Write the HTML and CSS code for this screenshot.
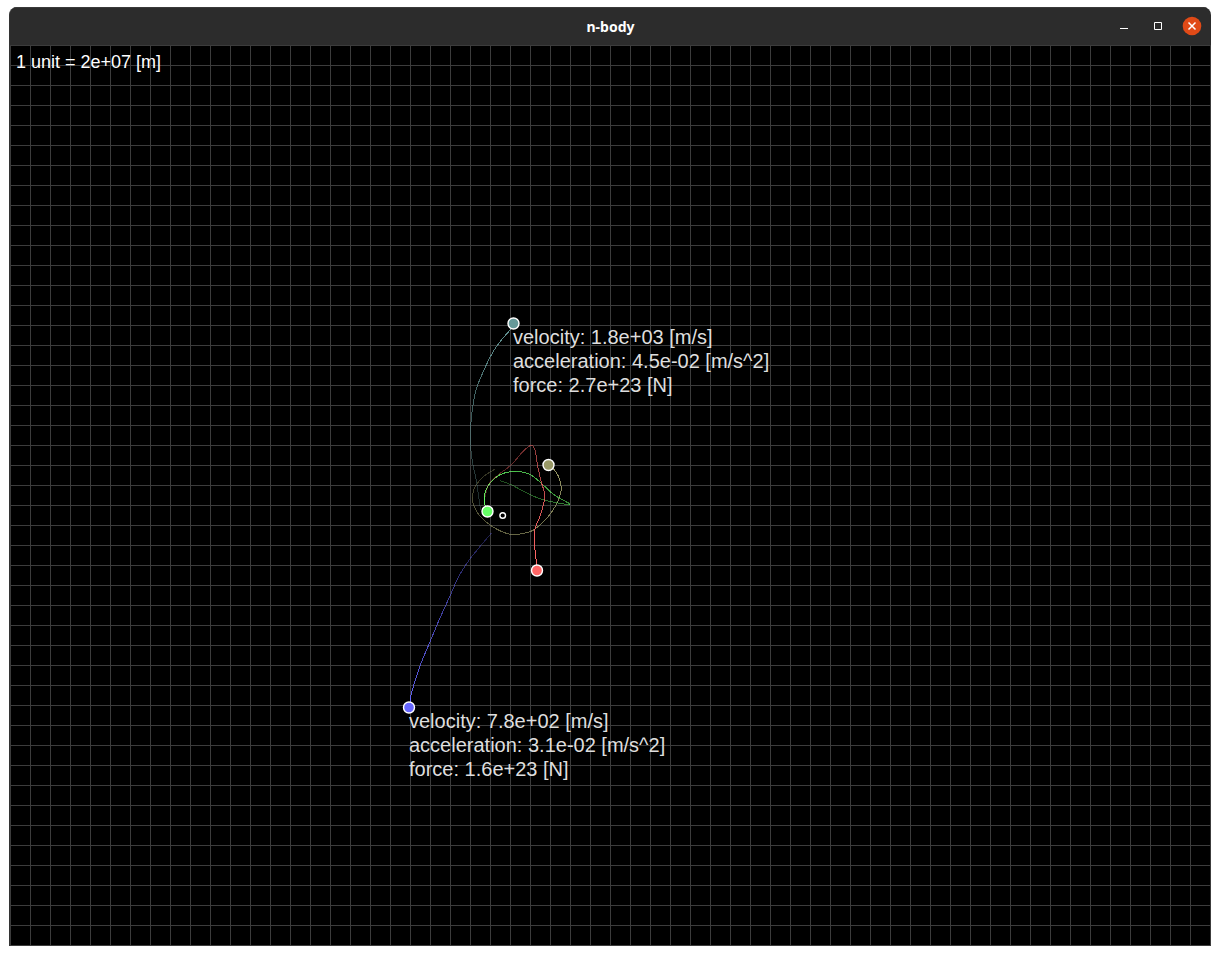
FILE: index.html
```html
<!DOCTYPE html>
<html lang="en">
<head>
<meta charset="utf-8">
<title>n-body</title>
<link rel="stylesheet" href="styles.css">
</head>
<body>
<main class="window">
  <header class="titlebar">
    <h1 class="title">n-body</h1>
    <div class="controls">
      <button class="control" type="button" aria-label="Minimize">
        <svg width="20" height="20" viewBox="0 0 20 20"><path d="M6 12.5h8" stroke="#fff" fill="none"/></svg>
      </button>
      <button class="control" type="button" aria-label="Maximize">
        <svg width="20" height="20" viewBox="0 0 20 20"><path d="M6.500 6.500h7v7h-7z" stroke="#fff" fill="none"/></svg>
      </button>
      <button class="control" type="button" aria-label="Close">
        <svg width="20" height="20" viewBox="0 0 20 20"><circle cx="10" cy="10" r="9.300" fill="#e04a17"/><path d="M6.500 6.500l7 7M13.500 6.500l-7 7" stroke="#fff" stroke-width="1.500" fill="none"/></svg>
      </button>
    </div>
  </header>
  <section class="space">
    <svg class="orbits" aria-hidden="true">
      <g transform="translate(-10 -45)">
        <g id="trails" class="trails"></g>
        <g class="bodies">
          <circle cx="513.500" cy="323.500" r="5.500" fill="#669999"/>
          <circle cx="548.500" cy="465" r="5.500" fill="#999966"/>
          <circle cx="487.500" cy="511.500" r="5.500" fill="#66ff66"/>
          <circle cx="537" cy="570.500" r="5.500" fill="#ff6666"/>
          <circle cx="409" cy="707.500" r="5.500" fill="#6666ff"/>
          <circle cx="502.700" cy="515.500" r="2.800" fill="#000"/>
        </g>
      </g>
    </svg>
    <p class="scale">1 unit = 2e+07 [m]</p>
    <div class="readout readout-teal">
      <p>velocity: 1.8e+03 [m/s]</p>
      <p>acceleration: 4.5e-02 [m/s^2]</p>
      <p>force: 2.7e+23 [N]</p>
    </div>
    <div class="readout readout-blue">
      <p>velocity: 7.8e+02 [m/s]</p>
      <p>acceleration: 3.1e-02 [m/s^2]</p>
      <p>force: 1.6e+23 [N]</p>
    </div>
  </section>
</main>
<script src="trails.js"></script>
</body>
</html>
```

FILE: styles.css
```css
* {
  box-sizing: border-box;
}

body {
  margin: 0;
  min-height: 100vh;
  padding: 7px 9px 9px;
  display: flex;
  background: #fff;
  font-family: "Liberation Sans", Arial, sans-serif;
}

p {
  margin: 0;
}

.window {
  flex: 1;
  display: flex;
  flex-direction: column;
  border-left: 1px solid #333;
  border-radius: 8px 8px 0 0;
  overflow: hidden;
  background: #2c2c2c;
}

.titlebar {
  display: grid;
  grid-template-columns: 1fr auto 1fr;
  align-items: center;
  height: 38px;
  padding-bottom: 1px;
  border-top: 1px solid #3a3a3a;
}

.title {
  grid-column: 2;
  margin: 0;
  padding-top: 2px;
  font-family: "Noto Sans", sans-serif;
  font-size: 14px;
  font-weight: 700;
  line-height: 20px;
  color: #fff;
}

.controls {
  display: flex;
  justify-content: flex-end;
  gap: 14px;
  padding-right: 9px;
}

.control {
  width: 20px;
  height: 20px;
  padding: 0;
  border: 0;
  background: none;
}

.control svg {
  display: block;
}

.space {
  position: relative;
  flex: 1;
  background-color: #000;
  background-image:
    linear-gradient(to right, #3c3c3c 1px, transparent 1px),
    linear-gradient(to bottom, #3c3c3c 1px, transparent 1px);
  background-size: 20px 20px;
}

.orbits {
  position: absolute;
  inset: 0;
  width: 100%;
  height: 100%;
}

.trails polyline {
  fill: none;
  stroke-width: 1;
  shape-rendering: crispEdges;
}

.bodies circle {
  stroke: #fff;
  stroke-width: 1.4;
}

.scale {
  position: relative;
  padding: 6px;
  font-size: 18px;
  line-height: 22px;
  color: #fff;
}

.readout {
  position: absolute;
  font-size: 20px;
  line-height: 24px;
  color: #dedede;
  white-space: nowrap;
}

.readout-teal {
  left: 503px;
  top: 280px;
}

.readout-blue {
  left: 399px;
  top: 664px;
}
```

FILE: trails.js
```js
// Each trail runs from the body's current position back to its oldest sample.
const trails = [
  { color: "#669999", end: 0.3, points: [[513,326],[510,330],[499,343],[490.7,356],[482.7,373],[476.7,388],[473,404.7],[470.8,424.7],[470.5,445],[472.7,463],[476.7,483],[480.5,510]] },
  { color: "#999966", end: 0.35, points: [[550,466],[556,472],[560,481],[561,491],[556.5,504],[547,518],[535,529],[525,533],[510,534.3],[493,527],[480,516],[474,506],[472.5,497],[475,487],[483,477],[495,469]] },
  { color: "#66ff66", end: 0.3, points: [[487,511],[484.7,504],[484.5,496],[487,488],[493.3,479.5],[503,473.5],[516.5,471.3],[530,474.5],[541,483],[553,494],[563,500],[570,504.5],[556.5,502.7],[541,499],[528,493.5],[511,484.7],[500,480.7]] },
  { color: "#ff6666", end: 0.25, points: [[537,566],[535,550],[534.5,531],[539.7,517],[544,502],[544.5,493],[541,481],[537.5,465],[535.7,453],[533.5,447],[530.5,445.5],[523,451.5],[511,465],[498,475],[489,484],[485,497]] },
  { color: "#6666ff", end: 0.3, points: [[410,704],[410.5,698],[413.3,686.7],[420,666],[430,641.7],[440,618],[450,596],[458,578],[468,561.7],[480,546.5],[491.5,533]] }
];

const STEPS = 5;
const layer = document.getElementById("trails");

// Catmull-Rom interpolation between b and c.
function spline(a, b, c, d, t) {
  return 0.5 * (2 * b + (c - a) * t + (2 * a - 5 * b + 4 * c - d) * t * t + (3 * b - a - 3 * c + d) * t * t * t);
}

for (const { color, end, points } of trails) {
  const last = points.length - 1;
  const at = i => points[Math.max(0, Math.min(last, i))];
  for (let i = 0; i < last; i++) {
    const [a, b, c, d] = [at(i - 1), at(i), at(i + 1), at(i + 2)];
    const samples = [];
    for (let s = 0; s <= STEPS; s++) {
      samples.push([0, 1].map(k => spline(a[k], b[k], c[k], d[k], s / STEPS)).join());
    }
    const line = document.createElementNS("http://www.w3.org/2000/svg", "polyline");
    line.setAttribute("points", samples.join(" "));
    line.setAttribute("stroke", color);
    line.setAttribute("stroke-opacity", 1 - (1 - end) * (i / (last - 1)));
    layer.append(line);
  }
}
```
